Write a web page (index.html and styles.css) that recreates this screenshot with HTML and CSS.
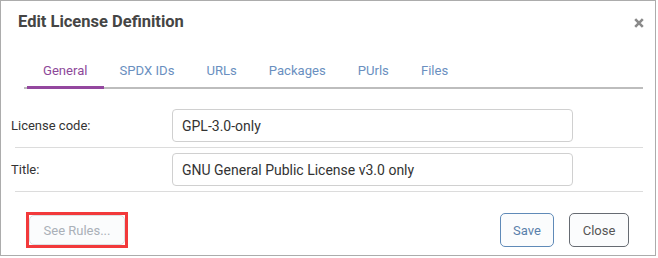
FILE: index.html
```html
<!DOCTYPE html>
<html lang="en">
<head>
    <meta charset="UTF-8">
    <meta name="viewport" content="width=device-width, initial-scale=1.0">
    <title>Edit License Definition</title>
    <link rel="stylesheet" href="styles.css">
</head>
<body>
    <div class="dialog">
        <div class="dialog-header">
            <h1>Edit License Definition</h1>
            <button class="close-x" aria-label="Close">
                <svg viewBox="0 0 10 10" width="10" height="10">
                    <path d="M1.2 1.2 L8.8 8.8 M8.8 1.2 L1.2 8.8" stroke="#8a8a8a" stroke-width="2.6" fill="none"/>
                </svg>
            </button>
        </div>
        <ul class="tabs">
            <li class="tab active">General</li>
            <li class="tab">SPDX IDs</li>
            <li class="tab">URLs</li>
            <li class="tab">Packages</li>
            <li class="tab">PUrls</li>
            <li class="tab">Files</li>
        </ul>
        <div class="form">
            <div class="row">
                <label>License code:</label>
                <input type="text" value="GPL-3.0-only">
            </div>
            <div class="row">
                <label>Title:</label>
                <input type="text" value="GNU General Public License v3.0 only">
            </div>
        </div>
        <div class="dialog-footer">
            <span class="highlight">
                <button class="btn btn-rules" disabled>See Rules...</button>
            </span>
            <div class="actions">
                <button class="btn btn-save">Save</button>
                <button class="btn btn-close">Close</button>
            </div>
        </div>
    </div>
</body>
</html>
```

FILE: styles.css
```css
body {
    margin: 0;
    background: #ffffff;
    font-family: Roboto, 'Liberation Sans', sans-serif;
}
.dialog {
    width: 656px;
    height: 256px;
    border: 1px solid #acacac;
    box-sizing: border-box;
    background: #ffffff;
}
.dialog-header {
    display: flex;
    justify-content: space-between;
    align-items: center;
    padding: 11px 11px 0 17px;
}
.dialog-header h1 {
    margin: 0;
    font-size: 16.5px;
    line-height: 20px;
    font-weight: 700;
    color: #454545;
}
.close-x {
    border: none;
    background: none;
    padding: 0;
    margin-top: 2px;
    width: 10px;
    height: 10px;
    display: flex;
}
.tabs {
    list-style: none;
    display: flex;
    margin: 23px 12px 0 23px;
    padding: 0 0 0 3px;
    border-bottom: 2px solid #bdbdbd;
}
.tab {
    font-size: 13.1px;
    line-height: 16px;
    padding: 8px 16px 7px;
    color: #6a8fc0;
    border-bottom: 3px solid transparent;
    margin-bottom: -2px;
}
.tab.active {
    color: #8d4899;
    border-bottom-color: #94479f;
}
.form {
    margin-top: 15px;
}
.row {
    display: flex;
    align-items: center;
    margin: 0 12px 0 14px;
    padding: 5px 0;
    border-bottom: 1px solid #dcdcdc;
}
.row label {
    width: 153px;
    margin-left: -4px;
    font-size: 13px;
    color: #333333;
}
.row input {
    width: 401px;
    height: 33px;
    box-sizing: border-box;
    margin-left: 8px;
    padding: 0 9px;
    border: 1px solid #d0d0d0;
    border-radius: 4px;
    font-family: Roboto, 'Liberation Sans', sans-serif;
    font-size: 14px;
    color: #333333;
}
.dialog-footer {
    display: flex;
    justify-content: space-between;
    align-items: flex-start;
    padding: 20px 26px 0 25px;
}
.highlight {
    display: flex;
    border: 3px solid #f2393b;
}
.actions {
    display: flex;
    gap: 15px;
    margin-top: 1px;
}
.btn {
    font-family: Roboto, 'Liberation Sans', sans-serif;
    font-size: 13px;
    height: 34px;
    padding: 0 12px;
    border-radius: 5px;
    background: #fbfcfd;
    box-sizing: border-box;
}
.btn-rules {
    width: 96px;
    height: 30px;
    color: #aab0b8;
    border: 1px solid #dde0e4;
}
.btn-save {
    width: 54px;
    color: #5a80ab;
    border: 1px solid #5f8ab8;
}
.btn-close {
    width: 60px;
    color: #555555;
    border: 1px solid #666b72;
}
```
